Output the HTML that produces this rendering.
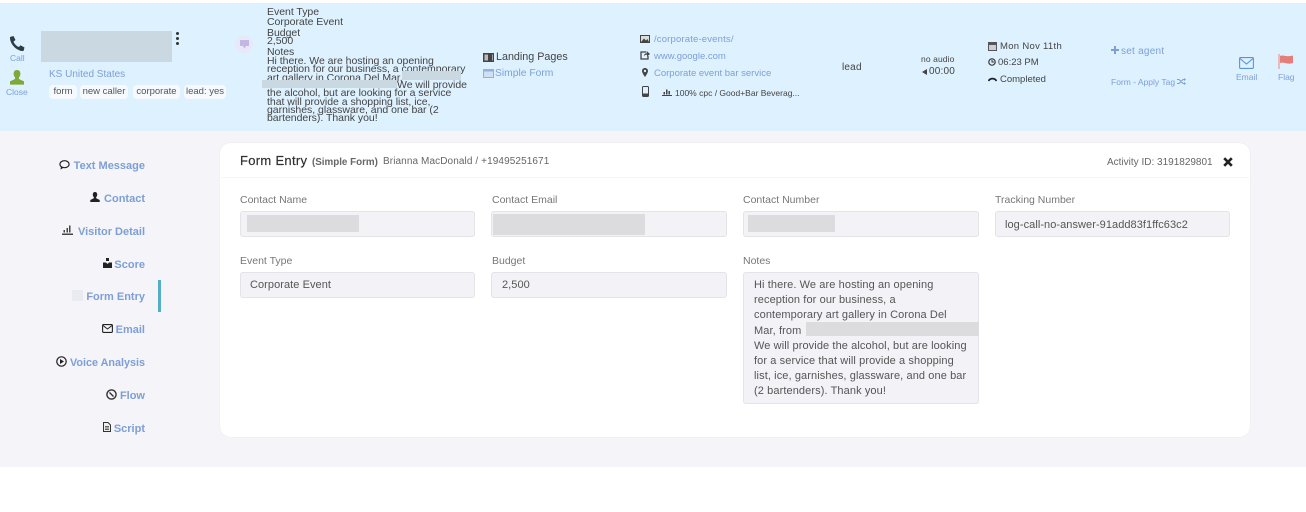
<!DOCTYPE html>
<html><head><meta charset="utf-8"><style>
html,body{margin:0;padding:0;background:#fff}
#p{position:relative;width:1306px;height:512px;overflow:hidden;background:#fff;font-family:"Liberation Sans",sans-serif;color:#555;filter:blur(.35px)}
#p div,#p svg{position:absolute}
.t{white-space:nowrap;line-height:14px}
.b{color:#7d9fd6}
.d{color:#444}
.lbl{font-size:10.5px;color:#777}
.inp{background:#f3f3f7;border:1px solid #e3e3e8;border-radius:3px;box-sizing:border-box;height:26px}
.val{font-size:11px;color:#555;letter-spacing:.06px}
.red{background:#dcdcdf}
.nav{font-size:11px;font-weight:bold;color:#7d9fd6;text-align:right;right:1161px}
.tag{background:#f6fafe;border-radius:4px;font-size:9.5px;color:#555;height:14px;line-height:14px;text-align:center}
.ev{font-size:10.5px;line-height:10px;color:#444;white-space:nowrap;left:267px;letter-spacing:-.03px}
.n{font-size:11px;line-height:15.2px;color:#555;left:754px;white-space:nowrap;letter-spacing:.1px}
</style></head><body><div id="p">
<div style="left:0;top:3px;width:1306px;height:128px;background:#def1ff"></div>
<div style="left:0;top:131px;width:1306px;height:336px;background:#f4f4f9"></div>

<!-- left header -->
<svg style="left:8px;top:35px" width="18" height="18" viewBox="0 0 18 18"><path d="M2 2 L5.5 1 L7.5 5 L5.5 6.5 C6.2 8.8 8.5 11.2 11 12 L12.5 10.3 L16.5 12.5 L15.5 16 C9 16.5 1.5 9 2 2Z" fill="#2c3e44"/></svg>
<div class="t b" style="left:10px;top:51px;font-size:8.5px">Call</div>
<svg style="left:9px;top:70px" width="16" height="15" viewBox="0 0 16 15"><path d="M8 0C5.6 0 4.6 1.8 4.6 3.8 4.6 5.4 5.3 6.8 6.2 7.5L6 9 1 11.4V14.6H15V11.4L10 9 9.8 7.5C10.7 6.8 11.4 5.4 11.4 3.8 11.4 1.8 10.4 0 8 0Z" fill="#7ea83a"/></svg>
<div class="t b" style="left:6px;top:85px;font-size:8.5px">Close</div>
<div style="left:41px;top:31px;width:131px;height:31px;background:#c9d8e1"></div>
<div style="left:176px;top:32px;width:3px;height:3px;background:#333;border-radius:50%"></div>
<div style="left:176px;top:37px;width:3px;height:3px;background:#333;border-radius:50%"></div>
<div style="left:176px;top:42px;width:3px;height:3px;background:#333;border-radius:50%"></div>
<div class="t b" style="left:49px;top:68px;font-size:10px">KS United States</div>
<div class="tag" style="left:49px;top:85px;width:28px">form</div>
<div class="tag" style="left:80px;top:85px;width:48px">new caller</div>
<div class="tag" style="left:133px;top:85px;width:47px">corporate</div>
<div class="tag" style="left:184px;top:85px;width:42px">lead: yes</div>
<div style="left:235px;top:35px;width:18px;height:18px;border-radius:50%;background:#e7e9f8"></div>
<svg style="left:240px;top:40px" width="9" height="9" viewBox="0 0 9 9"><path d="M0 0H9V6H6L4.5 8.5 3 6H0Z" fill="#c3b8e2"/></svg>

<!-- event text -->
<div class="ev" style="top:7px">Event Type</div>
<div class="ev" style="top:17px">Corporate Event</div>
<div class="ev" style="top:28px">Budget</div>
<div class="ev" style="top:36px">2,500</div>
<div class="ev" style="top:47px">Notes</div>
<div class="ev" style="top:56px">Hi there. We are hosting an opening</div>
<div class="ev" style="top:64px">reception for our business, a contemporary</div>
<div class="ev" style="top:73px">art gallery in Corona Del Mar,</div>
<div style="left:402px;top:71px;width:59px;height:9px;background:#c9d8e1"></div>
<div style="left:262px;top:79.5px;width:135px;height:8.5px;background:#c9d8e1"></div>
<div class="ev" style="top:80px;left:397px">We will provide</div>
<div class="ev" style="top:88px">the alcohol, but are looking for a service</div>
<div class="ev" style="top:97px">that will provide a shopping list, ice,</div>
<div class="ev" style="top:105px">garnishes, glassware, and one bar (2</div>
<div class="ev" style="top:113px">bartenders). Thank you!</div>

<!-- landing -->
<svg style="left:483px;top:53px" width="11" height="9" viewBox="0 0 11 9"><path d="M0 0H11V9H0Z" fill="#444"/><path d="M1.5 1.5H5V7.5H1.5ZM9 1.5H9.8V7.5H9Z" fill="#bbb"/></svg>
<div class="t" style="left:496px;top:50px;font-size:10.75px;color:#444">Landing Pages</div>
<svg style="left:483px;top:69px" width="11" height="9" viewBox="0 0 11 9"><path d="M0 0H11V9H0Z" fill="#8fb2e0"/><path d="M1 2.5H10V8H1Z" fill="#cfe0f3"/></svg>
<div class="t b" style="left:495px;top:67px;font-size:10.3px">Simple Form</div>

<!-- urls -->
<svg style="left:640px;top:35px" width="10" height="8" viewBox="0 0 10 8"><path d="M0 0H10V8H0Z" fill="#444"/><path d="M1 1H9V7H1Z" fill="#ddd"/><path d="M1 7L4 3.5 6 5.5 7.5 4 9 7Z" fill="#444"/></svg>
<div class="t b" style="left:654px;top:33px;font-size:9.5px;letter-spacing:.17px">/corporate-events/</div>
<svg style="left:640px;top:51px" width="10" height="9" viewBox="0 0 10 9"><path d="M6.5 1H1V8H8V5" fill="none" stroke="#444" stroke-width="1.3"/><path d="M4 5C4 3 5.5 2.2 7 2.2V.3L10 3 7 5.6V3.8C5.7 3.8 4.8 4 4 5Z" fill="#444"/></svg>
<div class="t b" style="left:654px;top:50px;font-size:9.5px">www.google.com</div>
<svg style="left:642px;top:68px" width="6" height="9" viewBox="0 0 6 9"><path d="M3 0C1.2 0 0 1.3 0 3 0 5 3 9 3 9S6 5 6 3C6 1.3 4.8 0 3 0ZM3 4.2A1.2 1.2 0 1 1 3 1.8 1.2 1.2 0 0 1 3 4.2Z" fill="#444"/></svg>
<div class="t b" style="left:654px;top:67px;font-size:9.5px">Corporate event bar service</div>
<svg style="left:642px;top:86px" width="7" height="11" viewBox="0 0 7 11"><rect x=".5" y=".5" width="6" height="10" rx="1" fill="none" stroke="#444"/><rect x="1" y="7.5" width="5" height="3" fill="#444"/></svg>
<svg style="left:662px;top:88px" width="10" height="8" viewBox="0 0 10 8"><path d="M0 7H10V8H0ZM1.5 4H3V6.5H1.5ZM4 1.5H5.5V6.5H4ZM6.5 3H8V6.5H6.5Z" fill="#444"/></svg>
<div class="t" style="left:675px;top:86px;font-size:8.5px;color:#444">100% cpc / Good+Bar Beverag...</div>

<div class="t d" style="left:842px;top:61px;font-size:10px;letter-spacing:.2px">lead</div>
<div class="t d" style="left:921px;top:52px;font-size:8.5px;letter-spacing:.1px">no audio</div>
<svg style="left:922px;top:69px" width="5" height="6" viewBox="0 0 5 6"><path d="M5 0V6L0 3Z" fill="#444"/></svg>
<div class="t d" style="left:929px;top:65px;font-size:10px;letter-spacing:.2px">00:00</div>

<svg style="left:988px;top:42px" width="9" height="9" viewBox="0 0 9 9"><path d="M0 0H9V9H0Z" fill="#555"/><path d="M1 3H8V8H1Z" fill="#ccd"/></svg>
<div class="t d" style="left:1000px;top:40px;font-size:9.5px;letter-spacing:.3px">Mon Nov 11th</div>
<svg style="left:988px;top:58px" width="8" height="8" viewBox="0 0 8 8"><circle cx="4" cy="4" r="3.2" fill="none" stroke="#333" stroke-width="1.2"/><path d="M4 2V4H6" fill="none" stroke="#333"/></svg>
<div class="t d" style="left:998px;top:56px;font-size:9.5px">06:23 PM</div>
<svg style="left:988px;top:77px" width="9" height="5" viewBox="0 0 9 5"><path d="M.5 4C2 .8 7 .8 8.5 4" fill="none" stroke="#222" stroke-width="1.7"/></svg>
<div class="t d" style="left:1000px;top:73px;font-size:9.5px">Completed</div>

<svg style="left:1111px;top:46px" width="8" height="8" viewBox="0 0 8 8"><path d="M3 0H5V3H8V5H5V8H3V5H0V3H3Z" fill="#7d9fd6"/></svg>
<div class="t b" style="left:1121px;top:45px;font-size:10px;letter-spacing:.25px">set agent</div>
<div class="t b" style="left:1111px;top:75px;font-size:8.5px">Form - Apply Tag</div>
<svg style="left:1177px;top:78px" width="9" height="7" viewBox="0 0 9 7"><path d="M0 1.5H2L6 5.5H7.5M0 5.5H2L6 1.5H7.5" fill="none" stroke="#7d9fd6"/><path d="M7 0L9 1.5 7 3ZM7 4L9 5.5 7 7Z" fill="#7d9fd6"/></svg>

<svg style="left:1239px;top:57px" width="15" height="12" viewBox="0 0 15 12"><rect x=".6" y=".6" width="13.8" height="10.8" rx="1" fill="none" stroke="#5b95cf" stroke-width="1.1"/><path d="M1 1.5L7.5 7 14 1.5" fill="none" stroke="#5b95cf" stroke-width="1.1"/></svg>
<div class="t b" style="left:1236px;top:70px;font-size:8.5px">Email</div>
<svg style="left:1278px;top:54px" width="16" height="16" viewBox="0 0 16 16"><path d="M1 0V15" stroke="#e08a8a" stroke-width="1"/><path d="M2 2C5 .5 8 3.5 15 1.5V9C9 11 6 7.5 2 9Z" fill="#e57d78"/></svg>
<div class="t b" style="left:1278px;top:70px;font-size:8.5px">Flag</div>

<!-- side nav -->
<svg style="left:59px;top:160px" width="11" height="10" viewBox="0 0 11 10"><ellipse cx="5.5" cy="4.2" rx="4.6" ry="3.5" fill="none" stroke="#222" stroke-width="1.2"/><path d="M2 6.5L1.5 9.5 5 7.5Z" fill="#222"/></svg>
<div class="t nav" style="top:159px">Text Message</div>
<svg style="left:90px;top:192px" width="10" height="10" viewBox="0 0 10 10"><path d="M5 0C3.4 0 2.8 1.2 2.8 2.6 2.8 3.8 3.3 4.7 3.9 5.2L3.8 6.3.3 8V10H9.7V8L6.2 6.3 6.1 5.2C6.7 4.7 7.2 3.8 7.2 2.6 7.2 1.2 6.6 0 5 0Z" fill="#222"/></svg>
<div class="t nav" style="top:192px">Contact</div>
<svg style="left:62px;top:225px" width="11" height="10" viewBox="0 0 11 10"><path d="M0 8.5H11V10H0ZM1.5 5H3V7.5H1.5ZM4.5 3H6V7.5H4.5ZM7 .5H8.5V7.5H7Z" fill="#444"/></svg>
<div class="t nav" style="top:225px">Visitor Detail</div>
<svg style="left:103px;top:258px" width="9" height="10" viewBox="0 0 9 10"><path d="M3 0H6V3H3ZM0 4.5H3L4.5 6 6 4.5H9V10H0Z" fill="#222"/></svg>
<div class="t nav" style="top:258px">Score</div>
<div style="left:72px;top:290px;width:11px;height:11px;background:#eaeaf1"></div>
<div class="t nav" style="top:290px">Form Entry</div>
<div style="left:158px;top:280px;width:3px;height:32px;background:#55aec8"></div>
<svg style="left:102px;top:324px" width="11" height="9" viewBox="0 0 11 9"><rect x=".6" y=".6" width="9.8" height="7.8" rx="1" fill="none" stroke="#222" stroke-width="1.1"/><path d="M1 1.5L5.5 5 10 1.5" fill="none" stroke="#222"/></svg>
<div class="t nav" style="top:323px">Email</div>
<svg style="left:56px;top:356px" width="11" height="11" viewBox="0 0 11 11"><circle cx="5.5" cy="5.5" r="4.7" fill="none" stroke="#222" stroke-width="1.2"/><path d="M4 3L8 5.5 4 8Z" fill="#222"/></svg>
<div class="t nav" style="top:356px;font-size:10.8px">Voice Analysis</div>
<svg style="left:106px;top:389px" width="11" height="11" viewBox="0 0 11 11"><circle cx="5.5" cy="5.5" r="4.6" fill="none" stroke="#333" stroke-width="1.4"/><path d="M3.5 3.5L7.5 7.5" stroke="#333" stroke-width="1.4"/></svg>
<div class="t nav" style="top:389px">Flow</div>
<svg style="left:103px;top:422px" width="8" height="10" viewBox="0 0 8 10"><path d="M.5.5H5L7.5 3V9.5H.5Z" fill="#eee" stroke="#333"/><path d="M2 4.5H6M2 6H6M2 7.5H6" stroke="#333" stroke-width=".7"/></svg>
<div class="t nav" style="top:422px">Script</div>

<!-- card -->
<div style="left:220px;top:143px;width:1030px;height:294px;background:#fff;border-radius:11px;box-shadow:0 0 1.5px rgba(0,0,0,.07)"></div>
<div style="left:221px;top:177px;width:1028px;height:1px;background:#f6f6f8"></div>
<div class="t" style="left:240px;top:154px;font-size:13px;color:#2f2f2f;letter-spacing:.3px;-webkit-text-stroke:.2px #2f2f2f">Form Entry</div>
<div class="t" style="left:312px;top:156px;font-size:9.8px;font-weight:bold;color:#666">(Simple Form)</div>
<div class="t" style="left:383px;top:155px;font-size:10px;color:#666;letter-spacing:.1px">Brianna MacDonald / +19495251671</div>
<div class="t" style="left:1107px;top:156px;font-size:10px;color:#666">Activity ID: 3191829801</div>
<svg style="left:1223px;top:157px" width="10" height="10" viewBox="0 0 10 10"><path d="M1.2 1.2L8.8 8.8M8.8 1.2L1.2 8.8" stroke="#222" stroke-width="2.6"/></svg>

<div class="t lbl" style="left:240px;top:193px">Contact Name</div>
<div class="t lbl" style="left:492px;top:193px">Contact Email</div>
<div class="t lbl" style="left:743px;top:193px">Contact Number</div>
<div class="t lbl" style="left:995px;top:193px">Tracking Number</div>
<div class="inp" style="left:240px;top:211px;width:235px"></div>
<div class="inp" style="left:491px;top:211px;width:236px"></div>
<div class="inp" style="left:743px;top:211px;width:236px"></div>
<div class="inp" style="left:995px;top:211px;width:235px"></div>
<div class="red" style="left:247px;top:215px;width:112px;height:17px"></div>
<div class="red" style="left:493px;top:214px;width:152px;height:21px"></div>
<div class="red" style="left:748px;top:215px;width:87px;height:17px"></div>
<div class="t val" style="left:1005px;top:218px">log-call-no-answer-91add83f1ffc63c2</div>

<div class="t lbl" style="left:240px;top:254px">Event Type</div>
<div class="t lbl" style="left:492px;top:254px">Budget</div>
<div class="t lbl" style="left:743px;top:254px">Notes</div>
<div class="inp" style="left:240px;top:272px;width:235px"></div>
<div class="inp" style="left:491px;top:272px;width:236px"></div>
<div class="t val" style="left:250px;top:278px">Corporate Event</div>
<div class="t val" style="left:502px;top:278px">2,500</div>

<div class="inp" style="left:743px;top:272px;width:236px;height:132px"></div>
<div class="n" style="top:278px">Hi there. We are hosting an opening<br>reception for our business, a<br>contemporary art gallery in Corona Del<br>Mar, from<br>We will provide the alcohol, but are looking<br>for a service that will provide a shopping<br>list, ice, garnishes, glassware, and one bar<br>(2 bartenders). Thank you!</div>
<div class="red" style="left:806px;top:322px;width:173px;height:14px"></div>
</div></body></html>
